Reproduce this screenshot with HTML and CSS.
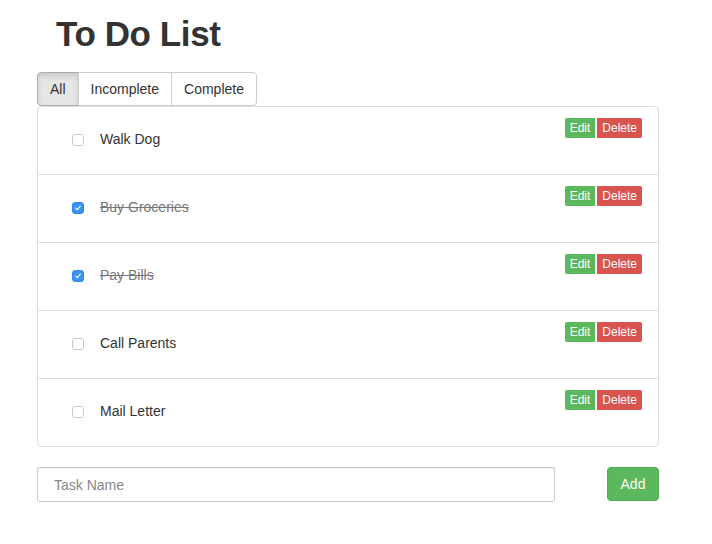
FILE: index.html
```html
<!DOCTYPE html>
<html>
<head>
<meta charset="utf-8">
<link rel="stylesheet" href="styles.css">
</head>
<body>
<div class="container">
  <h1 class="title">To Do List</h1>
  <div class="filters">
    <button class="filter active">All</button>
    <button class="filter">Incomplete</button>
    <button class="filter">Complete</button>
  </div>
  <ul class="list">
    <li class="item">
      <div class="task"><span class="check"></span><span class="label">Walk Dog</span></div>
      <div class="actions"><button class="btn-edit">Edit</button><button class="btn-delete">Delete</button></div>
    </li>
    <li class="item">
      <div class="task"><span class="check checked"><svg viewBox="0 0 12 12" width="12" height="12"><path d="M3.3 6.2 L5.2 8.1 L8.8 3.8" fill="none" stroke="#fff" stroke-width="1.4" stroke-linecap="round" stroke-linejoin="round"/></svg></span><span class="label done">Buy Groceries</span></div>
      <div class="actions"><button class="btn-edit">Edit</button><button class="btn-delete">Delete</button></div>
    </li>
    <li class="item">
      <div class="task"><span class="check checked"><svg viewBox="0 0 12 12" width="12" height="12"><path d="M3.3 6.2 L5.2 8.1 L8.8 3.8" fill="none" stroke="#fff" stroke-width="1.4" stroke-linecap="round" stroke-linejoin="round"/></svg></span><span class="label done">Pay Bills</span></div>
      <div class="actions"><button class="btn-edit">Edit</button><button class="btn-delete">Delete</button></div>
    </li>
    <li class="item">
      <div class="task"><span class="check"></span><span class="label">Call Parents</span></div>
      <div class="actions"><button class="btn-edit">Edit</button><button class="btn-delete">Delete</button></div>
    </li>
    <li class="item">
      <div class="task"><span class="check"></span><span class="label">Mail Letter</span></div>
      <div class="actions"><button class="btn-edit">Edit</button><button class="btn-delete">Delete</button></div>
    </li>
  </ul>
  <div class="add-row">
    <input class="task-input" type="text" placeholder="Task Name">
    <button class="btn-add">Add</button>
  </div>
</div>
</body>
</html>
```

FILE: styles.css
```css
* { box-sizing: border-box; }
body {
  margin: 0;
  font-family: "Liberation Sans", Arial, sans-serif;
  font-size: 14px;
  color: #333;
  background: #fff;
}
button { margin: 0; }
.container {
  margin-left: 37px;
  width: 622px;
}
.title {
  margin: 14px 0 18px 0;
  padding-left: 19px;
  height: 40px;
  line-height: 40px;
  font-size: 35px;
  font-weight: bold;
  letter-spacing: -0.4px;
  color: #333;
}
.filters {
  display: flex;
  height: 34px;
}
.filter {
  font-family: inherit;
  font-size: 14px;
  color: #333;
  background: #fff;
  border: 1px solid #ccc;
  padding: 6px 12px;
  height: 34px;
  line-height: 20px;
  margin-left: -1px;
}
.filter:first-child {
  margin-left: 0;
  border-radius: 4px 0 0 4px;
}
.filter:last-child {
  border-radius: 0 4px 4px 0;
}
.filter.active {
  background: #e6e6e6;
  border-color: #adadad;
  box-shadow: inset 0 3px 5px rgba(0,0,0,0.125);
}
.list {
  list-style: none;
  margin: 0 0 20px 0;
  padding: 0;
  border: 1px solid #ddd;
  border-radius: 4px;
}
.item {
  display: flex;
  justify-content: space-between;
  align-items: flex-start;
  height: 68px;
  padding: 10px 15px;
  border-top: 1px solid #ddd;
}
.item:first-child {
  border-top: none;
  height: 67px;
}
.task {
  display: flex;
  align-items: center;
  align-self: center;
  margin-left: 19px;
  margin-top: -3px;
}
.check {
  width: 12px;
  height: 12px;
  border: 1px solid #c9c9c9;
  border-radius: 3px;
  background: #fff;
  display: inline-flex;
  align-items: center;
  justify-content: center;
  position: relative;
  top: 1px;
}
.check.checked {
  background: #3b93f5;
  border-color: #3487e6;
}
.check svg { display: block; }
.label {
  margin-left: 16px;
  line-height: 20px;
}
.label.done {
  color: #777;
  text-decoration: line-through;
}
.actions {
  display: flex;
}
.actions button {
  font-family: inherit;
  font-size: 12px;
  line-height: 18px;
  height: 22px;
  padding: 1px 5px;
  margin: 0;
  color: #fff;
  border: 1px solid;
}
.btn-edit {
  background: #5cb85c;
  border-color: #4cae4c;
  border-radius: 3px 0 0 3px;
}
.btn-delete {
  background: #d9534f;
  border-color: #d43f3a;
  border-radius: 0 3px 3px 0;
}
.add-row {
  display: flex;
  justify-content: space-between;
  align-items: flex-start;
}
.task-input {
  width: 518px;
  height: 35px;
  border: 1px solid #ccc;
  border-radius: 2px;
  padding: 6px 16px;
  font-family: inherit;
  font-size: 14px;
  color: #555;
  box-shadow: inset 0 1px 1px rgba(0,0,0,0.075);
}
.task-input::placeholder { color: #888; }
.btn-add {
  font-family: inherit;
  font-size: 14px;
  line-height: 20px;
  height: 34px;
  width: 52px;
  padding: 6px 0;
  color: #fff;
  background: #5cb85c;
  border: 1px solid #4cae4c;
  border-radius: 4px;
}
```
